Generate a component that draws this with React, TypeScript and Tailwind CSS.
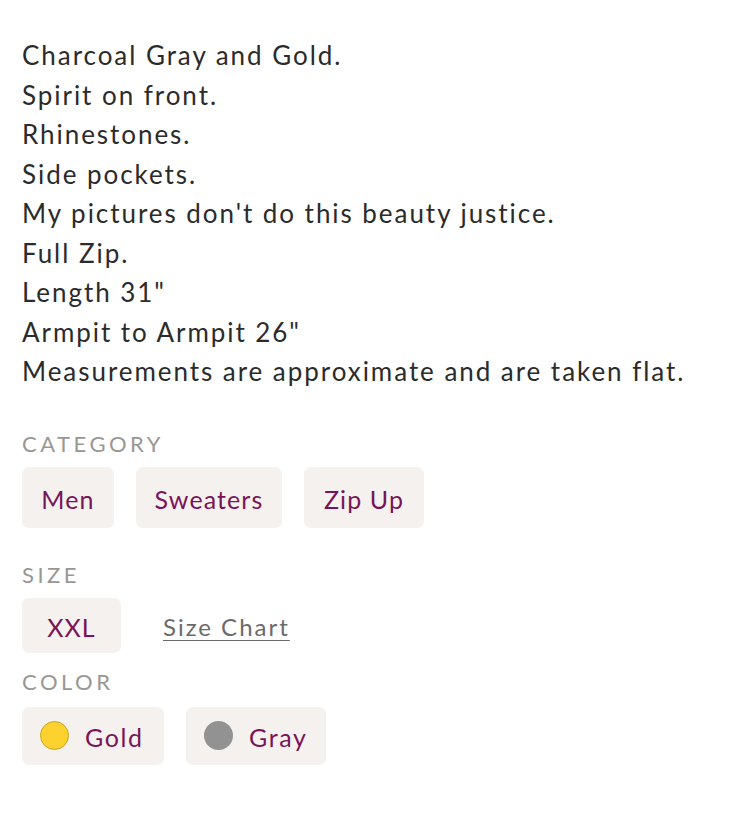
import React from "react";

const lines = [
  "Charcoal Gray and Gold.",
  "Spirit on front.",
  "Rhinestones.",
  "Side pockets.",
  "My pictures don't do this beauty justice.",
  "Full Zip.",
  'Length 31"',
  'Armpit to Armpit 26"',
  "Measurements are approximate and are taken flat.",
];

function Label({ children, className }: { children: React.ReactNode; className?: string }) {
  return (
    <div className={"text-[22px] leading-[24px] tracking-[3.5px] text-[#9a9792] " + (className ?? "")}>
      {children}
    </div>
  );
}

function Chip({ children, w, h }: { children: React.ReactNode; w: string; h: string }) {
  return (
    <div className={"flex items-center justify-center rounded-[7px] bg-[#f4f1ee] pt-[5px] text-[25px] tracking-[1.1px] text-[#7a1458] " + w + " " + h}>
      {children}
    </div>
  );
}

export default function App() {
  return (
    <div className="min-h-[815px] w-[746px] bg-white pl-[22px] pt-[36px] font-['Lato',sans-serif]">
      <div className="text-[26px] leading-[39.5px] tracking-[1.95px] text-[#2b2b2b]">
        {lines.map((l) => (
          <div key={l}>{l}</div>
        ))}
      </div>

      <Label className="mt-[40px]">CATEGORY</Label>
      <div className="mt-[11px] flex gap-[22px]">
        <Chip w="w-[92px]" h="h-[61px]">Men</Chip>
        <Chip w="w-[146px]" h="h-[61px]">Sweaters</Chip>
        <Chip w="w-[120px]" h="h-[61px]">Zip Up</Chip>
      </div>

      <Label className="mt-[35px]">SIZE</Label>
      <div className="mt-[11px] flex items-center gap-[42px]">
        <Chip w="w-[99px]" h="h-[55px]">XXL</Chip>
        <a className="pt-[4px] text-[24px] tracking-[2px] text-[#6b6b6b] underline decoration-1 underline-offset-[4px]">Size Chart</a>
      </div>

      <Label className="mt-[17px]">COLOR</Label>
      <div className="mt-[13px] flex gap-[22px]">
        <div className="flex h-[58px] w-[142px] items-center rounded-[7px] bg-[#f4f1ee] pl-[18px]">
          <span className="h-[29px] w-[29px] rounded-full border border-[#c9a520] bg-[#fdd22f]" />
          <span className="ml-[16px] pt-[5px] text-[25px] tracking-[1.6px] text-[#7a1458]">Gold</span>
        </div>
        <div className="flex h-[58px] w-[140px] items-center rounded-[7px] bg-[#f4f1ee] pl-[18px]">
          <span className="h-[29px] w-[29px] rounded-full bg-[#929292]" />
          <span className="ml-[16px] pt-[5px] text-[25px] tracking-[1.6px] text-[#7a1458]">Gray</span>
        </div>
      </div>
    </div>
  );
}
